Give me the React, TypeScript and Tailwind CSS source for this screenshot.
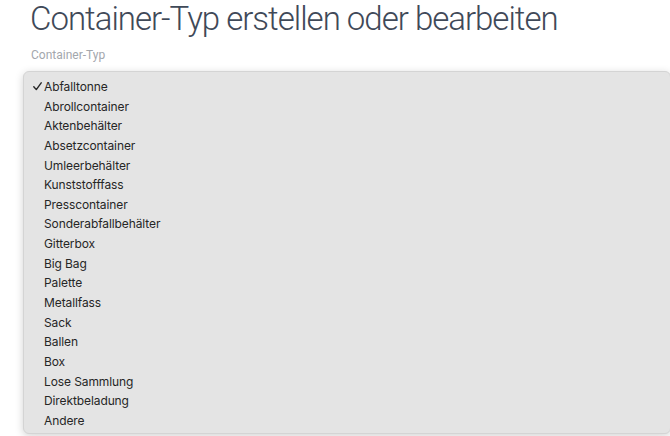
import React from "react";

const items = [
  "Abfalltonne",
  "Abrollcontainer",
  "Aktenbehälter",
  "Absetzcontainer",
  "Umleerbehälter",
  "Kunststofffass",
  "Presscontainer",
  "Sonderabfallbehälter",
  "Gitterbox",
  "Big Bag",
  "Palette",
  "Metallfass",
  "Sack",
  "Ballen",
  "Box",
  "Lose Sammlung",
  "Direktbeladung",
  "Andere",
];

export default function App() {
  return (
    <div className="relative h-[436px] w-[670px] overflow-hidden bg-white">
      <div className="pl-[30px]">
        <h1
          className="pt-[2px] text-[33px] font-light leading-[34px] tracking-[-1px] whitespace-nowrap text-[#3f4958]"
          style={{ fontFamily: "Roboto, 'Liberation Sans', sans-serif" }}
        >
          Container-Typ erstellen oder bearbeiten
        </h1>
        <div
          className="mt-[12px] pl-[1px] text-[12px] leading-[14px] text-[#a3a7ad]"
          style={{ fontFamily: "Roboto, 'Liberation Sans', sans-serif" }}
        >
          Container-Typ
        </div>
      </div>
      <div className="absolute left-[23px] top-[71px] w-[648px] h-[363px] rounded-[6px] border border-[#d4d4d4] bg-[#e4e4e4] shadow-[0_2px_8px_rgba(0,0,0,0.18)] pt-[5px]">
        <ul
          className="text-[12px] tracking-[-0.1px] text-[#262626]"
          style={{ fontFamily: "Inter, 'Liberation Sans', Arial, sans-serif" }}
        >
          {items.map((it, i) => (
            <li key={it} className="relative flex h-[19.65px] items-center pl-[20px] leading-[19.65px]">
              {i === 0 && (
                <svg
                  className="absolute left-[9px] top-[5px]"
                  width="9"
                  height="9"
                  viewBox="0 0 9 9"
                  fill="none"
                >
                  <path d="M0.8 4.8 L3.3 7.6 L8.2 0.8" stroke="#262626" strokeWidth="1.4" strokeLinecap="round" strokeLinejoin="round" />
                </svg>
              )}
              {it}
            </li>
          ))}
        </ul>
      </div>
    </div>
  );
}
